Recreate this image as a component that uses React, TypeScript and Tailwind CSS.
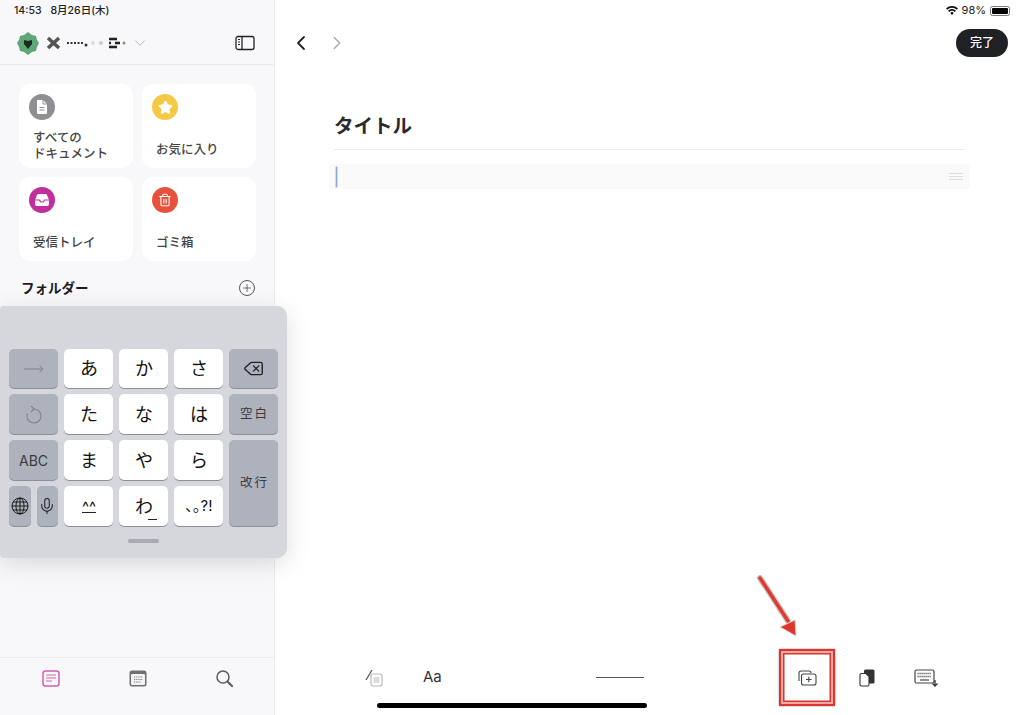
import type { ReactNode } from 'react';
import { ChevronDown, ChevronLeft, ChevronRight, Delete, Mic, Plus, Star, Trash2 } from 'lucide-react';

const FONT = "font-['Inter','Noto_Sans_CJK_JP',sans-serif]";

const DocIcon = () => (
  <svg width="14" height="16" viewBox="0 0 14 16">
    <path d="M2 1h6l4 4v9a1 1 0 0 1-1 1H3a1 1 0 0 1-1-1V1z" fill="#fff" />
    <path d="M8 1v4h4" fill="none" stroke="#8e8e93" strokeWidth="1" />
    <path d="M4.5 8.5h5M4.5 11h5" stroke="#8e8e93" strokeWidth="1.2" />
  </svg>
);

const TrayIcon = () => (
  <svg width="16" height="14" viewBox="0 0 16 14">
    <path d="M1 7l2-5a1.5 1.5 0 0 1 1.4-1h7.2A1.5 1.5 0 0 1 13 2l2 5v4a2 2 0 0 1-2 2H3a2 2 0 0 1-2-2V7z" fill="#fff" />
    <path d="M1 7h4.5l1 2h3l1-2H15" fill="none" stroke="#c0309c" strokeWidth="1.2" />
  </svg>
);

type CardProps = {
  color: string;
  icon: ReactNode;
  children: ReactNode;
};

const Card = ({ color, icon, children }: CardProps) => (
  <div className="relative flex h-[84px] flex-col rounded-[11px] bg-white pl-[14px] pr-1">
    <div className={`mt-[10px] -ml-[4px] flex h-[26px] w-[26px] items-center justify-center rounded-full ${color}`}>{icon}</div>
    <div className="mt-auto mb-[6px] text-[12.5px] font-medium leading-[16px] text-[#444]">{children}</div>
  </div>
);

const Key = ({ children, dark, className = '' }: { children: ReactNode; dark?: boolean; className?: string }) => (
  <div
    className={`flex items-center justify-center rounded-[5px] shadow-[0_1px_0_#8d9099] ${dark ? 'bg-[#aeb2bd] text-[#3a3a3c]' : 'bg-white pl-px text-[#111]'} ${className}`}
  >
    {children}
  </div>
);

const Keyboard = () => (
  <div className="absolute left-0 top-[306px] h-[252px] w-[287px] rounded-r-[10px] rounded-l-[4px] bg-[#d6d7dc] pl-[9px] pt-[43px] shadow-[0_6px_24px_rgba(0,0,0,0.13)]">
    <div className="grid grid-cols-[49px_49px_49px_49px_49px] grid-rows-[39px_40px_40px_40px] gap-x-[6px] gap-y-[6px] text-[18px]">
      <Key dark>
        <svg width="20" height="8" viewBox="0 0 20 8" fill="none" stroke="#7f828b" strokeWidth="1">
          <path d="M0 4h19M15.500 .5L19 4l-3.500 3.500" />
        </svg>
      </Key>
      <Key>あ</Key>
      <Key>か</Key>
      <Key>さ</Key>
      <Key dark>
        <Delete size={21} strokeWidth={1.6} color="#222" />
      </Key>
      <Key dark>
        <svg width="16" height="19" viewBox="0 0 16 19" fill="none" stroke="#7f828b" strokeWidth="1.100">
          <path d="M8 4a7 7 0 1 1-6.500 4.400" />
          <path d="M5 0.800L8 4 5 7" />
        </svg>
      </Key>
      <Key>た</Key>
      <Key>な</Key>
      <Key>は</Key>
      <Key dark className="pl-[2px] text-[12.5px] tracking-[2px]">空白</Key>
      <Key dark className="text-[14px]">ABC</Key>
      <Key>ま</Key>
      <Key>や</Key>
      <Key>ら</Key>
      <Key dark className="row-span-2 pl-[2px] text-[12.5px] tracking-[2px]">改行</Key>
      <div className="flex gap-[6px]">
        <Key dark className="w-[22px]">
          <svg width="18" height="18" viewBox="0 0 18 18" fill="none" stroke="#111" strokeWidth=".9">
            <circle cx="9" cy="9" r="8" />
            <ellipse cx="9" cy="9" rx="4" ry="8" />
            <path d="M9 1v16M1 9h16M2 5h14M2 13h14" />
          </svg>
        </Key>
        <Key dark className="w-[22px]">
          <Mic size={18} strokeWidth={1.4} color="#222" />
        </Key>
      </div>
      <Key className="text-[15px]">
        <span className="border-b border-[#222] leading-[10px] pt-[3px]">^^</span>
      </Key>
      <Key>
        <span className="relative">
          わ
          <span className="absolute -right-[4px] bottom-0 h-px w-[9px] bg-[#222]" />
        </span>
      </Key>
      <Key className="text-[15px]">､｡?!</Key>
    </div>
    <div className="mt-[13px] ml-[119px] h-[4px] w-[31px] rounded-full bg-[#a9abb2]" />
  </div>
);

const Sidebar = () => (
  <aside className="flex h-full w-[275px] shrink-0 flex-col border-r border-[#ececef] bg-[#f8f8fa]">
    <div className="flex h-[20px] items-center pl-[14px] pt-px text-[10.5px] font-medium text-[#222]">
      <span>14:53</span>
      <span className="ml-[9px]">8月26日(木)</span>
    </div>
    <div className="flex h-[45px] items-center border-b border-[#ebebee] pl-[17px] pr-[19px] pt-[2px]">
      <svg width="22" height="23" viewBox="0 0 22 23" className="blur-[0.4px]">
        <path d="M11 0l4 3 4 1 1 4 2 3-2 4-1 4-4 1-4 3-4-3-4-1-1-4-2-4 2-3 1-4 4-1z" fill="#5fa777" />
        <path d="M7 8l4 1 4-1 0 4-4 5-4-5z" fill="#1c2a20" />
      </svg>
      <svg className="ml-[7px] blur-[0.5px]" width="82" height="14" viewBox="0 0 82 14">
        <path d="M2 2l11 10M13 2L2 12" stroke="#555" strokeWidth="3.500" />
        <path d="M21 7h16" stroke="#333" strokeWidth="2" strokeDasharray="2 1.500" />
        <circle cx="40" cy="9" r="1.500" fill="#333" />
        <circle cx="47" cy="7" r="2" fill="#ddd" />
        <circle cx="55" cy="7" r="2" fill="#ccc" />
        <path d="M63 3h8M63 7h2M69 7h5M63 11h8" stroke="#222" strokeWidth="2.500" />
        <circle cx="78" cy="7" r="1.500" fill="#888" />
      </svg>
      <ChevronDown size={18} strokeWidth={1.3} color="#b5b5ba" className="ml-[3px]" />
      <svg className="ml-auto" width="20" height="16" viewBox="0 0 20 16" fill="none" stroke="#222" strokeWidth="1.300">
        <rect x="1" y="1.500" width="18" height="13" rx="2" />
        <path d="M7 1.500v13" />
        <path d="M3 4.500h2M3 7h2M3 9.500h2" strokeWidth="1" />
      </svg>
    </div>
    <div className="grid grid-cols-[114px_114px] gap-[9px] pl-[19px] pt-[19px]">
      <Card color="bg-[#8e8e93]" icon={<DocIcon />}>
        すべての
        <br />
        ドキュメント
      </Card>
      <Card color="bg-[#f6c944]" icon={<Star size={15} fill="#fff" color="#fff" />}>
        <span className="mb-[4px] block">お気に入り</span>
      </Card>
      <Card color="bg-[#c0309c]" icon={<TrayIcon />}>
        <span className="mb-[4px] block">受信トレイ</span>
      </Card>
      <Card color="bg-[#e6533c]" icon={<Trash2 size={14} color="#fff" strokeWidth={1.8} />}>
        <span className="mb-[4px] block">ゴミ箱</span>
      </Card>
    </div>
    <div className="mt-[17px] flex items-center justify-between pl-[21px] pr-[19px]">
      <span className="text-[13.5px] font-bold text-[#1c1c1e]">フォルダー</span>
      <span className="flex h-[16px] w-[16px] items-center justify-center rounded-full border border-[#555]">
        <Plus size={12} strokeWidth={1.5} color="#444" />
      </span>
    </div>
    <nav className="mt-auto flex h-[58px] items-start justify-between border-t border-[#ececef] pl-[42px] pr-[41px] pt-[12px]">
      <svg width="18" height="17" viewBox="0 0 18 17" fill="none" stroke="#cf62ae">
        <rect x="1" y="1" width="16" height="15" rx="2.500" strokeWidth="1.500" />
        <path d="M4 5h10M4 8h10M4 11h6" strokeWidth="1.200" />
      </svg>
      <svg width="18" height="17" viewBox="0 0 18 17">
        <rect x=".5" y=".5" width="17" height="16" rx="2.500" fill="#6e6e73" />
        <rect x="2" y="4" width="14" height="11" rx="1" fill="#f2f2f4" />
        <path d="M5 7h9M5 9.500h9M5 12h7" stroke="#77777c" strokeWidth="1.200" strokeDasharray="1.200 1" />
      </svg>
      <svg width="17" height="17" viewBox="0 0 17 17" fill="none" stroke="#5c5c60">
        <circle cx="7" cy="7" r="6" strokeWidth="1.500" />
        <path d="M11.500 11.500L16 16" strokeWidth="2.200" strokeLinecap="round" />
      </svg>
    </nav>
  </aside>
);

const Toolbar = () => (
  <div className="mb-[9px] flex h-[57px] items-center">
    <svg className="ml-[90px]" width="18" height="18" viewBox="0 0 18 18" fill="none">
      <rect x="6" y="5" width="11" height="12" rx="2" stroke="#b8b8bb" strokeWidth="1.200" />
      <path d="M8.500 9h6M8.500 11h6M8.500 13h6" stroke="#b8b8bb" />
      <path d="M1 11L7 1" stroke="#555" strokeWidth="1.300" />
    </svg>
    <span className="ml-[40px] text-[15px] text-[#333]">Aa</span>
    <div className="ml-[154px] h-px w-[48px] bg-[#555]" />
    <div className="ml-[135px] flex h-[57px] w-[56px] items-center justify-center border-2 border-[#d8362e] shadow-[inset_0_0_0_2px_#f0a9a3,inset_0_0_0_3.500px_#d8362e,0_0_2px_#999]">
      <svg width="20" height="16" viewBox="0 0 20 16" fill="none" stroke="#444" strokeWidth="1.100">
        <path d="M2 11V3a2 2 0 0 1 2-2h8a2 2 0 0 1 2 2" />
        <rect x="4.500" y="4" width="14.500" height="11" rx="2" fill="#fff" />
        <path d="M11.800 6.800v5.500M9 9.500h5.500" />
      </svg>
    </div>
    <svg className="ml-[24px]" width="16" height="18" viewBox="0 0 16 18">
      <rect x="5" y="0.500" width="10.500" height="14" rx="1.500" fill="#333" />
      <path d="M1 6a1.500 1.500 0 0 1 1.500-1.500H7l3 3v8a1.500 1.500 0 0 1-1.500 1.500h-6A1.500 1.500 0 0 1 1 15.500z" fill="#fff" stroke="#333" strokeWidth="1.100" />
    </svg>
    <svg className="ml-[39px]" width="25" height="18" viewBox="0 0 25 18" fill="none">
      <rect x="1" y="1" width="19" height="13" rx="1.500" stroke="#444" strokeWidth="1.200" />
      <path d="M3.500 4.500h14M3.500 7.500h14" stroke="#555" strokeWidth="1.500" strokeDasharray="1.200 .8" />
      <path d="M6 11h9" stroke="#555" strokeWidth="1.300" />
      <path d="M21 11v6M18.500 14.500l2.500 2.500 2.500-2.500" stroke="#333" strokeWidth="1.300" />
    </svg>
  </div>
);

const Editor = () => (
  <main className="relative flex h-full min-w-0 flex-1 flex-col bg-white">
    <div className="flex h-[20px] items-center justify-end gap-[4px] pr-[14px] pt-px text-[11px] text-[#222]">
      <svg width="12" height="9" viewBox="0 0 12 9" fill="#111">
        <path d="M6 9L4.200 7a2.500 2.500 0 0 1 3.600 0zM3.200 6L2 4.700a5.600 5.600 0 0 1 8 0L8.800 6a4 4 0 0 0-5.600 0zM1.200 3.800L0 2.600a8.500 8.500 0 0 1 12 0l-1.200 1.200a6.800 6.800 0 0 0-9.600 0z" />
      </svg>
      <span>98%</span>
      <span className="flex h-[10px] w-[20px] items-center rounded-[2.500px] border border-[#777] p-[1px]">
        <span className="h-full w-full rounded-[1px] bg-black" />
      </span>
    </div>
    <div className="flex h-[45px] items-start pl-[14px] pr-[16px] pt-[9px]">
      <ChevronLeft size={24} strokeWidth={1.8} color="#222" className="mt-[2px]" />
      <ChevronRight size={22} strokeWidth={1.6} color="#aaa" className="ml-[13px] mt-[3px]" />
      <button className="ml-auto h-[28px] w-[52px] rounded-full bg-[#1f2125] text-[12px] font-medium text-white">完了</button>
    </div>
    <div className="flex-1 pl-[59px] pr-[59px] pt-[48px]">
      <h1 className="border-b border-[#ececec] pb-[9px] text-[19.5px] font-bold leading-[27px] text-[#2a2a2c]">タイトル</h1>
      <div className="-mx-[5px] mt-[14px] flex h-[25px] items-center justify-between rounded-[3px] bg-[#fafafa] pl-[7px] pr-[7px]">
        <span className="h-[20px] w-px bg-[#8da4dc] shadow-[0_0_0_0.500px_#a9bbe6]" />
        <span className="flex w-[14px] flex-col gap-[2px]">
          <span className="h-px bg-[#ddd]" />
          <span className="h-px bg-[#ddd]" />
          <span className="h-px bg-[#ddd]" />
        </span>
      </div>
    </div>
    <Toolbar />
    <div className="absolute bottom-[7px] left-[102px] h-[5px] w-[270px] rounded-full bg-black" />
    <svg className="absolute left-[480px] top-[573px]" width="48" height="68" viewBox="0 0 48 68">
      <path d="M5 5L33 48" stroke="#c9c4c4" strokeWidth="6" strokeLinecap="round" />
      <path d="M5 5L33 48" stroke="#df3a2e" strokeWidth="3.500" strokeLinecap="round" />
      <path d="M25 54L40 47L41 63Z" fill="#e0352b" stroke="#d8d0cf" strokeWidth="1" />
    </svg>
  </main>
);

const App = () => (
  <div className={`relative flex h-[715px] w-[1024px] overflow-hidden ${FONT}`}>
    <Sidebar />
    <Editor />
    <Keyboard />
  </div>
);

export default App;
